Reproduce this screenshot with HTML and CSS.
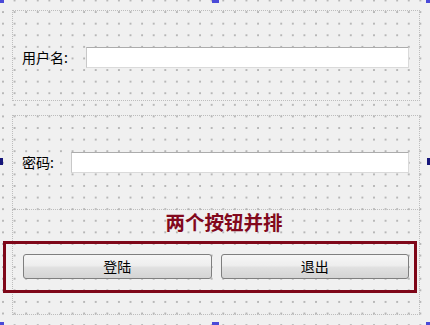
FILE: index.html
```html
<!DOCTYPE html>
<html lang="zh">
<head>
<meta charset="utf-8">
<link rel="stylesheet" href="styles.css">
</head>
<body>
<div class="canvas">
  <div class="region region-user">
    <div class="field">
      <span class="label label-user">用户名:</span>
      <div class="input input-user"></div>
    </div>
  </div>
  <div class="region region-pass">
    <div class="field">
      <span class="label label-pass">密码:</span>
      <div class="input input-pass"></div>
    </div>
  </div>
  <div class="region region-btns">
    <div class="title">两个按钮并排</div>
    <div class="btnbox">
      <button class="btn">登陆</button>
      <button class="btn">退出</button>
    </div>
  </div>
  <span class="handle h-tl"></span>
  <span class="handle h-tc"></span>
  <span class="handle h-tr"></span>
  <span class="handle side h-ml"></span>
  <span class="handle side h-mr"></span>
  <span class="handle h-bl"></span>
  <span class="handle h-bc"></span>
  <span class="handle h-br"></span>
</div>
</body>
</html>
```
FILE: styles.css
```css
html, body {
  margin: 0;
  padding: 0;
}
body {
  width: 430px;
  height: 325px;
  overflow: hidden;
  background-color: #f0f0f0;
  font-family: "Noto Sans CJK SC", "Noto Sans", sans-serif;
}
.canvas {
  position: relative;
  width: 430px;
  height: 325px;
  box-sizing: border-box;
  padding: 10px 10px 0 12px;
  background-image: radial-gradient(circle at 1px 1px, #b6b6b6 0.7px, rgba(182,182,182,0) 1.1px);
  background-size: 11.6px 11.6px;
  background-position: 2px -0.5px;
}
.region {
  border: 1px dotted #bdbdbd;
  box-sizing: border-box;
}
.region-user {
  height: 91px;
  padding: 36px 10px 0 9px;
}
.region-pass {
  margin-top: 14px;
  height: 95px;
  padding: 36px 10px 0 9px;
}
.region-btns {
  margin-top: -1px;
  height: 106px;
  display: flex;
  flex-direction: column;
}
.field {
  display: flex;
  align-items: center;
  height: 21px;
}
.label {
  font-size: 14px;
  color: #000;
  line-height: 21px;
}
.label-user { width: 64px; }
.label-pass { width: 49px; }
.input {
  flex: 1;
  height: 21px;
  box-sizing: border-box;
  background: #fff;
  border: 1px solid #dadada;
  border-top-color: #acacac;
  border-left-color: #c8c8c8;
}
.title {
  height: 23px;
  line-height: 23px;
  font-size: 19.5px;
  font-weight: bold;
  color: #82081c;
  text-align: center;
  padding-left: 16px;
}
.btnbox {
  margin: 8px 2px 0 -10px;
  border: 3px solid #7e0618;
  padding: 10px 5px 11px 17px;
  display: flex;
  gap: 9px;
}
.btn {
  flex: 1;
  height: 25px;
  margin: 0;
  padding: 0;
  border: 1px solid #7f7f7f;
  border-radius: 3px;
  background: linear-gradient(#f6f6f6 0%, #eeeeee 45%, #e0e0e0 55%, #d4d4d4 100%);
  font-family: "Noto Sans CJK SC", "Noto Sans", sans-serif;
  font-size: 14px;
  color: #000;
  line-height: 23px;
}
.handle {
  position: absolute;
  width: 7px;
  height: 7px;
  background: #4a4ad8;
}
.handle.side { background: #16167a; }
.h-tl { left: -3px; top: -4px; }
.h-tc { left: 212px; top: -4px; }
.h-tr { right: -3px; top: -4px; }
.h-ml { left: -4px; top: 158px; }
.h-mr { right: -4px; top: 158px; }
.h-bl { left: -3px; bottom: -4px; }
.h-bc { left: 212px; bottom: -4px; }
.h-br { right: -3px; bottom: -4px; }
```
